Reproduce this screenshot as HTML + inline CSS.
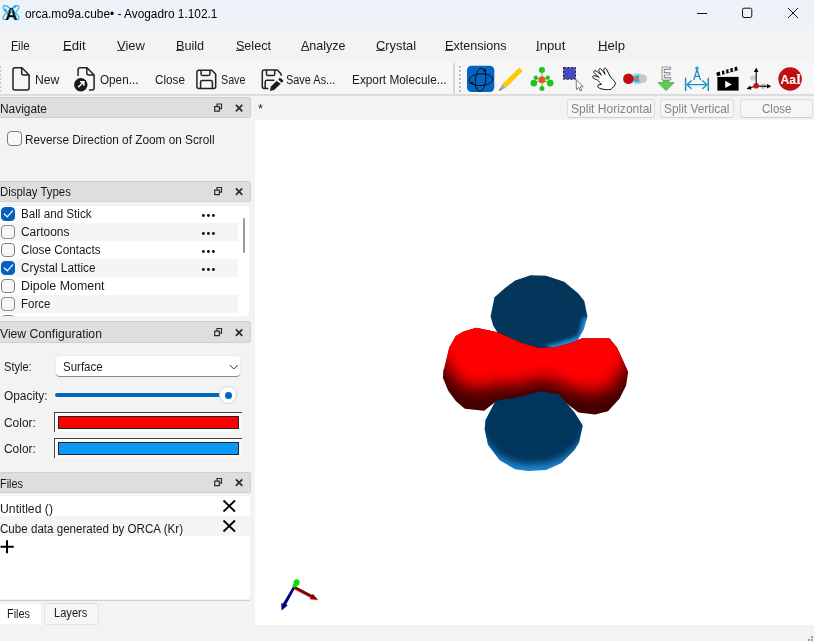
<!DOCTYPE html>
<html>
<head>
<meta charset="utf-8">
<title>orca.mo9a.cube - Avogadro 1.102.1</title>
<style>
html,body{margin:0;padding:0;}
body{width:814px;height:641px;overflow:hidden;position:relative;background:#f3f3f3;font-family:"Liberation Sans",sans-serif;font-size:12px;color:#1a1a1a;}
.a{position:absolute;}
.t{position:absolute;white-space:nowrap;line-height:16px;height:16px;transform-origin:0 50%;}
.t u{text-decoration-thickness:1px;text-underline-offset:0.4px;text-decoration-color:#444;}
.dockhead{position:absolute;left:-1px;width:250px;height:19px;background:#dedede;border:1px solid #d0d0d0;border-radius:1.5px;}
.cb{position:absolute;width:12.6px;height:12.6px;border:1px solid #858585;border-radius:4px;background:#f7f7f7;}
.cb.on{background:#0560c0;border-color:#0560c0;}
.btn{position:absolute;height:17px;top:99px;border:1px solid #dcdcdc;border-bottom-color:#cfcfcf;border-radius:3.5px;background:#f6f6f6;}
svg{position:absolute;overflow:visible;}
</style>
</head>
<body>
<!-- bars -->
<div class="a" style="left:0;top:0;width:814px;height:29px;background:#eef3f9;"></div>
<div class="a" style="left:0;top:61.5px;width:814px;height:32.5px;background:#f6f6f6;"></div>
<div class="a" style="left:0;top:94px;width:814px;height:2px;background:#dcdcdc;"></div>

<!-- canvas -->
<div class="a" style="left:255px;top:120px;width:559px;height:505px;background:#fff;"></div>
<div class="btn" style="left:567px;width:86px;"></div>
<div class="btn" style="left:660px;width:72px;"></div>
<div class="btn" style="left:740px;width:71px;"></div>

<!-- dock headers -->
<div class="dockhead" style="top:97px;"></div>
<div class="dockhead" style="top:180.5px;"></div>
<div class="dockhead" style="top:321px;height:19.5px;"></div>
<div class="dockhead" style="top:471.5px;"></div>

<!-- navigate checkbox -->
<div class="cb" style="left:7.3px;top:131.3px;width:13px;height:13px;border-color:#7c7c7c;"></div>

<!-- display types list -->
<div class="a" style="left:0;top:205.5px;width:249px;height:110.2px;background:#fff;border-radius:0 4px 4px 0;"></div>
<div class="a" style="left:0;top:223px;width:238px;height:18px;background:#f5f5f5;"></div>
<div class="a" style="left:0;top:259px;width:238px;height:18px;background:#f5f5f5;"></div>
<div class="a" style="left:0;top:295px;width:238px;height:17.6px;background:#f5f5f5;"></div>
<div class="a" style="left:243.2px;top:217.5px;width:1.4px;height:35px;background:#9c9c9c;border-radius:1px;"></div>
<div class="cb on" style="left:0.6px;top:206.5px;"></div>
<div class="cb" style="left:0.6px;top:224.5px;"></div>
<div class="cb" style="left:0.6px;top:242.5px;"></div>
<div class="cb on" style="left:0.6px;top:260.5px;"></div>
<div class="cb" style="left:0.6px;top:278.5px;"></div>
<div class="cb" style="left:0.6px;top:296.5px;"></div>
<div class="a" style="left:0.6px;top:314.5px;width:12.6px;height:6px;border:1px solid #858585;border-radius:4px;clip-path:inset(0 0 6px 0);"></div>
<svg style="left:0;top:0" width="250" height="320" viewBox="0 0 250 320">
 <g fill="none" stroke="#fff" stroke-width="1.2" stroke-linecap="round" stroke-linejoin="round">
  <path d="M4.3 214 L7.3 216.8 L12.6 210.8"/>
  <path d="M4.3 268 L7.3 270.8 L12.6 264.8"/>
 </g>
 <g fill="#111">
  <circle cx="203.4" cy="215.5" r="1.45"/><circle cx="208.4" cy="215.5" r="1.45"/><circle cx="213.4" cy="215.5" r="1.45"/>
  <circle cx="203.4" cy="233.5" r="1.45"/><circle cx="208.4" cy="233.5" r="1.45"/><circle cx="213.4" cy="233.5" r="1.45"/>
  <circle cx="203.4" cy="251.5" r="1.45"/><circle cx="208.4" cy="251.5" r="1.45"/><circle cx="213.4" cy="251.5" r="1.45"/>
  <circle cx="203.4" cy="269.5" r="1.45"/><circle cx="208.4" cy="269.5" r="1.45"/><circle cx="213.4" cy="269.5" r="1.45"/>
 </g>
</svg>

<!-- view configuration -->
<div class="a" style="left:56px;top:356px;width:184px;height:20px;background:#fff;border-radius:4px;border-bottom:1px solid #8a8a8a;box-shadow:0 0 0 0.5px #e5e5e5;"></div>
<div class="a" style="left:55px;top:393px;width:166px;height:4px;background:#0067c0;border-radius:2px;"></div>
<div class="a" style="left:220px;top:387px;width:16px;height:16px;border-radius:50%;background:#fff;box-shadow:0 0 0 1px #d6d6d6;"></div>
<div class="a" style="left:224.5px;top:391.5px;width:7px;height:7px;border-radius:50%;background:#0067c0;"></div>
<div class="a" style="left:54px;top:412px;width:187px;height:19px;background:#f9f9f9;border-left:1px solid #444;border-top:1px solid #444;"></div>
<div class="a" style="left:58px;top:416px;width:179px;height:11px;background:#ff0000;border:1px solid #222;"></div>
<div class="a" style="left:54px;top:438px;width:187px;height:19px;background:#f9f9f9;border-left:1px solid #444;border-top:1px solid #444;"></div>
<div class="a" style="left:58px;top:442px;width:179px;height:11px;background:#0a98f7;border:1px solid #222;"></div>

<!-- files list -->
<div class="a" style="left:0;top:496px;width:250px;height:103px;background:#fff;border-radius:0 0 4px 0;"></div>
<div class="a" style="left:0;top:516px;width:250px;height:20px;background:#f5f5f5;"></div>
<div class="a" style="left:0;top:600.3px;width:250px;height:1.2px;background:#cfcfcf;"></div>
<div class="a" style="left:0;top:604px;width:41px;height:20px;background:#fff;border-radius:3px 3px 0 0;"></div>
<div class="a" style="left:44px;top:603px;width:53px;height:20px;background:#f6f6f6;border:1px solid #e2e2e2;border-radius:3px;"></div>

<svg style="left:0;top:0" width="814" height="641" viewBox="0 0 814 641">
 <!-- dock header buttons -->
 <g id="dockbtn" fill="none" stroke="#2b2b2b">
  <path d="M214.7 106.7h4.6v4.4h-4.6z M217 106.5v-2.5h4.5v4.6h-2" stroke-width="1.2"/>
  <path d="M235.9 104.9l6.4 6.4m0-6.4l-6.4 6.4" stroke-width="1.7"/>
 </g>
 <use href="#dockbtn" y="83.5"/>
 <use href="#dockbtn" y="224.5"/>
 <use href="#dockbtn" y="374.5"/>
 <!-- combo chevron -->
 <path d="M229.8 365l4 4 4-4" fill="none" stroke="#333" stroke-width="1"/>
 <!-- file X icons -->
 <g fill="none" stroke="#000" stroke-width="1.8">
  <path d="M223.5 500.5l11.5 11m0-11l-11.5 11"/>
  <path d="M223.5 520.5l11.5 11m0-11l-11.5 11"/>
  <path d="M0.5 546.7h13.2M7 540.2v13" stroke-width="2"/>
 </g>
 <!-- window controls -->
 <g fill="none" stroke="#111" stroke-width="1">
  <path d="M697 13.5h10.2"/>
  <rect x="742.5" y="8.2" width="9.3" height="9.3" rx="1.5"/>
  <path d="M788 8l10 10m0-10l-10 10"/>
 </g>
 <!-- size grip -->
 <g fill="#a0a0a0"><rect x="811" y="636" width="2" height="2"/><rect x="808" y="639" width="2" height="2"/><rect x="811" y="639" width="2" height="2"/></g>
<!--ICONS1S-->
 <!-- app icon -->
 <g>
  <g fill="none" stroke="#2bb5e8" stroke-width="1.1">
   <ellipse cx="11" cy="12.6" rx="10" ry="3" transform="rotate(-40 11 12.6)"/>
   <ellipse cx="11" cy="12.6" rx="10" ry="3" transform="rotate(40 11 12.6)"/>
  </g>
  <text x="11.3" y="19.8" text-anchor="middle" font-family="Liberation Sans, sans-serif" font-weight="bold" font-size="17" fill="#111">A</text>
  <circle cx="5.3" cy="10.2" r="1.6" fill="#2bb5e8"/>
  <circle cx="14.8" cy="6.6" r="1.5" fill="#2bb5e8"/>
  <path d="M9.7 11.2 L11.3 8.3 L12.9 11.2z" fill="#2bb5e8"/>
 </g>
 <!-- New -->
 <g fill="none" stroke="#222" stroke-width="1.5" stroke-linejoin="round">
  <path d="M15 67.7h6.9l7.2 7.4v12.8a2 2 0 0 1 -2 2h-12.1a2 2 0 0 1 -2 -2v-18.2a2 2 0 0 1 2 -2z"/>
  <path d="M21.7 67.9v5.2a2 2 0 0 0 2 2h5.2"/>
 </g>
 <!-- Open -->
 <g fill="none" stroke="#222" stroke-width="1.5" stroke-linejoin="round">
  <path d="M78.1 76v-6.3a2 2 0 0 1 2 -2h6.8l7.2 7.4v12.8a2 2 0 0 1 -2 2h-3.2"/>
  <path d="M86.8 67.9v5.2a2 2 0 0 0 2 2h5.2"/>
 </g>
 <circle cx="80.8" cy="84.8" r="6.7" fill="#1a1a1a"/>
 <path d="M78.2 87.3L83.6 82M80 81.8h3.9v3.9" fill="none" stroke="#fff" stroke-width="1.5"/>
 <!-- Save -->
 <g fill="none" stroke="#222" stroke-width="1.5" stroke-linejoin="round">
  <path d="M198.9 70.2h13l3.8 4v12.4a2 2 0 0 1 -2 2h-14.8a2 2 0 0 1 -2 -2v-14.4a2 2 0 0 1 2 -2z"/>
  <path d="M201.1 70.4v3.5a1.6 1.6 0 0 0 1.6 1.6h5.6a1.6 1.6 0 0 0 1.6 -1.6v-3.5"/>
  <path d="M200.6 88.4v-6.4a1.6 1.6 0 0 1 1.6 -1.6h8.6a1.6 1.6 0 0 1 1.6 1.6v6.4"/>
 </g>
 <!-- Save As -->
 <g fill="none" stroke="#222" stroke-width="1.5" stroke-linejoin="round">
  <path d="M268.4 88.6h-4.1a2 2 0 0 1 -2 -2v-14.7a2 2 0 0 1 2 -2h13l3.8 4v1.8"/>
  <path d="M266.5 70.2v3.7a1.6 1.6 0 0 0 1.6 1.6h5a1.6 1.6 0 0 0 1.6 -1.6v-3.7"/>
  <path d="M265.2 88.4v-6.6a1.6 1.6 0 0 1 1.6 -1.6h7.6"/>
 </g>
 <path d="M276.6 81.3L280.4 83.8L274.3 89.5L270.3 90.7L271.2 86.5z" fill="#1a1a1a" stroke="#1a1a1a" stroke-width="0.6" stroke-linejoin="round"/>
 <rect x="278.4" y="78.8" width="5" height="2.8" rx="1.1" fill="#1a1a1a" transform="rotate(40 280.9 80.2)"/>
<!--ICONS1E-->
<!--ICONS2S-->
 <g fill="#bdbdbd"><rect x="0" y="66" width="1.2" height="1.6"/><rect x="0" y="70.1" width="1.2" height="1.6"/><rect x="0" y="74.1" width="1.2" height="1.6"/><rect x="0" y="78.2" width="1.2" height="1.6"/><rect x="0" y="82.2" width="1.2" height="1.6"/><rect x="0" y="86.3" width="1.2" height="1.6"/><rect x="0" y="90.3" width="1.2" height="1.6"/></g>
 <!-- toolbar separator + handle -->
 <rect x="453" y="63" width="2" height="31" fill="#d8d8d8"/>
 <g fill="#9a9a9a">
  <rect x="459" y="66" width="1.6" height="1.6"/><rect x="459" y="70.1" width="1.6" height="1.6"/><rect x="459" y="74.1" width="1.6" height="1.6"/><rect x="459" y="78.2" width="1.6" height="1.6"/><rect x="459" y="82.2" width="1.6" height="1.6"/><rect x="459" y="86.3" width="1.6" height="1.6"/><rect x="459" y="90.3" width="1.6" height="1.6"/>
 </g>
 <!-- navigate -->
 <rect x="467" y="65.8" width="27.3" height="26.3" rx="4.5" fill="#0563c1"/>
 <g fill="none" stroke="#0a0a0a" stroke-width="0.9">
  <ellipse cx="481" cy="79.7" rx="11.8" ry="5.9" transform="rotate(-3 481 79.7)"/>
  <ellipse cx="480.6" cy="79.8" rx="5.2" ry="11.7" transform="rotate(6 480.6 79.8)"/>
 </g>
 <path d="M482.6 69.2L486.2 69.5L485.5 73z" fill="#0a0a0a"/>
 <path d="M469.2 82.9L472.5 81.4L473.3 84.9z" fill="#0a0a0a"/>
 <!-- pencil -->
 <path d="M519.3 67.4L522.7 70.9L505.9 87.8L502.4 83.9z" fill="#fbcb04"/>
 <path d="M502.4 83.9L505.9 87.8L499 91z" fill="#a8a8a8"/>
 <path d="M500.2 88.3L501.5 89.8L499 91z" fill="#555"/>
 <!-- molecule -->
 <g stroke="#7a9a5a" stroke-width="0.9">
  <path d="M541.95 79.8V70M541.95 79.8V88.4M541.95 79.8L533.8 83.1M541.95 79.8L550.2 83.1M541.95 79.8L535.8 77.7M541.95 79.8L547.7 77.7"/>
 </g>
 <g fill="#1fc41f">
  <circle cx="541.95" cy="70" r="3.05"/><circle cx="541.95" cy="88.4" r="2.5"/>
  <circle cx="533.8" cy="83.1" r="3.4"/><circle cx="550.2" cy="83.1" r="3.4"/>
  <circle cx="535.8" cy="77.7" r="2.2"/><circle cx="547.7" cy="77.7" r="2.2"/>
 </g>
 <circle cx="541.95" cy="79.8" r="3.5" fill="#e25b26"/>
 <!-- selection -->
 <rect x="563.5" y="67.5" width="12" height="11.7" fill="#4a4abf" stroke="#111" stroke-width="0.9" stroke-dasharray="2.2 1.6"/>
 <path d="M576.2 79.6L576.4 89.6L578.7 87.5L580.3 91L581.8 90.3L580.3 86.9L583.2 86.7z" fill="#fff" stroke="#666" stroke-width="0.9" stroke-linejoin="round"/>
<!--ICONS2E-->
<!--ICONS3S-->
 <!-- hand -->
 <path d="M608.3 89.6C606.5 89.9 603.5 89.3 601 88.8C599.2 88.4 597.6 87.3 597.8 86C598 84.6 599.6 84.3 601.6 84.6C600.6 83.4 599.4 81.6 597.6 80.2C596 79 593.6 78.8 592.8 77.6C592.2 76.4 593.2 75.6 594.6 75.8C596.4 76 598.2 77 599.2 77.4C597.8 75.8 595.2 74.2 594 72.6C593.2 71.4 594.4 70.2 595.8 70.9C598 72 600.2 74.2 601.4 75.2C600.6 73.6 599 71.6 598.8 70.2C598.7 68.9 600.2 68.2 601.2 69.2C602.8 70.8 604 73 605 74.4C604.6 72.8 603.6 70.6 603.8 69.2C604 68 605.6 67.8 606.4 69C608 71.4 608.6 74 610 76.2C611.6 78.6 614.6 80.8 615.4 83.2C615.8 85 612.4 88 610.8 89.4z" fill="#fff" stroke="#111" stroke-width="1" stroke-linejoin="round"/>
 <!-- bond-centric -->
 <defs>
  <radialGradient id="glow" cx="0.5" cy="0.5" r="0.5">
   <stop offset="0.35" stop-color="#2aa0c8" stop-opacity="0.95"/>
   <stop offset="1" stop-color="#6cc4e0" stop-opacity="0"/>
  </radialGradient>
 </defs>
 <ellipse cx="637.5" cy="78.8" rx="9" ry="6.5" fill="url(#glow)"/>
 <rect x="632" y="78" width="8" height="1.6" fill="#ee6a6a"/>
 <circle cx="628.4" cy="78.8" r="5.3" fill="#bf0e0e"/>
 <circle cx="642.8" cy="78.8" r="4" fill="#c6c6c6"/>
 <!-- optimize -->
 <text x="666.1" y="80" text-anchor="middle" font-family="Liberation Sans, sans-serif" font-weight="bold" font-size="18" fill="#fff" stroke="#505050" stroke-width="0.7" transform="translate(666.1 0) scale(0.86 1) translate(-666.1 0)">E</text>
 <path d="M663.3 80.4h5.5v2.2h5.3L666 90.6L658 82.6h5.3z" fill="#5ccb5c" stroke="#35a035" stroke-width="0.7" stroke-linejoin="round"/>
 <!-- measure -->
 <g fill="none" stroke="#1c8fc0" stroke-width="1.3" stroke-linecap="round" stroke-linejoin="round">
  <circle cx="697" cy="68.2" r="1.1"/>
  <path d="M693.8 79.6L697 69.8L700.4 79.6M694.9 76.4h4.3"/>
  <path d="M687 84.7h20M691.3 80.8L687 84.7L691.3 88.6M702.7 80.8L707 84.7L702.7 88.6"/>
  <path d="M685.6 78.2v12.2M708.3 78.2v12.2" stroke-width="1.5"/>
 </g>
 <!-- clapper -->
 <rect x="717.4" y="76.9" width="21.2" height="13.7" fill="#000"/>
 <path d="M725.2 80.8v7.2l6.6 -3.6z" fill="#fff"/>
 <path d="M716.1 72.8L736.8 66.6L737.9 70.3L717.2 76.2z" fill="#000"/>
 <g stroke="#fff" stroke-width="1.9">
  <path d="M720.9 70.8l0.3 4.2M725.1 69.5l0.3 4.2M729.3 68.3l0.3 4.2M733.5 67l0.3 4.2"/>
 </g>
 <!-- align axes -->
 <circle cx="753" cy="78" r="2.8" fill="#cfcfcf"/>
 <circle cx="763.3" cy="86.2" r="2.8" fill="#c4c4c4"/>
 <g stroke="#000" stroke-width="1.1" fill="#000">
  <path d="M756.2 85V71" fill="none"/>
  <path d="M756.2 67.6l2.3 4.4h-4.6z" stroke="none"/>
  <path d="M756.2 86.2H767.5" fill="none"/>
  <path d="M771.2 86.2l-4.2 2.3v-4.6z" stroke="none"/>
  <path d="M756 86L749.5 88" fill="none"/>
  <path d="M746.6 89l3.4 -3.6 1.6 4.2z" stroke="none"/>
 </g>
 <circle cx="756.2" cy="85.8" r="2.8" fill="#c81414"/>
 <!-- AaI -->
 <circle cx="790.1" cy="79" r="11.8" fill="#bf1010"/>
 <text x="780.4" y="83.9" font-family="Liberation Sans, sans-serif" font-weight="bold" font-size="13.2" fill="#fff" transform="translate(780.4 0) scale(0.92 1) translate(-780.4 0)">Aa<tspan font-family="Liberation Serif, serif" font-size="14.2">I</tspan></text>
<!--ICONS3E-->

<!--ORBS-->
 <!-- orbital -->
 <defs>
  <path id="pTop" d="M530.6 275.3 L546.1 275.8 L564.2 281.8 L578.3 293.4 L584.3 301.1 L587.4 316.6 L583.5 329.5 L577.1 341.1 L560 349 L543.5 350 L520.3 344 L498.4 334 L493.2 325.6 L490.6 316.6 L494.5 297.2 L504.8 288.2 L515.1 280.5 Z"/>
  <path id="pBot" d="M497.1 398 L515.1 395 L540.9 389 L559 392 L566.7 403.5 L574.5 412.6 L582.7 425.5 L579.1 442.2 L574.5 450 L561.6 462.9 L546.1 470.1 L528 471.1 L515.1 469.3 L499.7 460.3 L488 444.8 L484.7 429.3 L485.5 420.3 Z"/>
  <path id="pRed" d="M444.2 368.2 L449.3 347.6 L455.8 336 L463.5 331.6 L476.4 327.7 L498.4 332.6 L520.3 342.4 L538.4 348.1 L553.8 347.6 L571.9 342.4 L582.2 338.3 L609.3 338.3 L617 347.6 L623 360.5 L627.4 370 L628.1 372.6 L626.1 385.5 L619.6 398.4 L608 411.3 L595.1 414.4 L578.4 412.6 L566.7 403.5 L559 394.5 L540.9 391.2 L515.1 397.9 L497.1 400.4 L484.2 410.8 L464.8 408.7 L455.8 401 L448.1 390.6 L442.9 377.7 L443.4 370 Z"/>
  <clipPath id="cTop"><use href="#pTop"/></clipPath>
  <clipPath id="cBot"><use href="#pBot"/></clipPath>
  <clipPath id="cRed"><use href="#pRed"/></clipPath>
  <radialGradient id="gTop" gradientUnits="userSpaceOnUse" cx="524" cy="292" r="74">
   <stop offset="0" stop-color="#04355a"/>
   <stop offset="0.85" stop-color="#04355a"/>
   <stop offset="0.93" stop-color="#0c5c9c"/>
   <stop offset="1" stop-color="#2196e8"/>
  </radialGradient>
  <filter id="b3" x="-20%" y="-30%" width="140%" height="160%"><feGaussianBlur stdDeviation="2.2"/></filter>
  <filter id="b4" x="-20%" y="-20%" width="140%" height="140%"><feGaussianBlur stdDeviation="4"/></filter>
  <filter id="b6" x="-20%" y="-20%" width="140%" height="140%"><feGaussianBlur stdDeviation="8"/></filter>
 </defs>
 <use href="#pTop" fill="#04355a"/>
 <g clip-path="url(#cTop)">
  <path d="M548 349.5 L555.8 348.6 L571.9 343.4 L582.2 339.3 L585 329.5 L588 318" fill="none" stroke="#2398ea" stroke-width="9" stroke-linejoin="round" filter="url(#b3)"/>
 </g>
 <g clip-path="url(#cBot)">
  <rect x="480" y="385" width="110" height="90" fill="#208ede"/>
  <path d="M440.0 370.0 L440.0 423.0 L478.9 423.3 L482.6 438.8 L495.7 454.3 L513.0 463.3 L527.4 465.1 L547.7 464.1 L565.0 456.9 L579.5 444.0 L584.6 436.2 L588.7 419.5 L630.0 419.0 L630.0 370.0 Z" fill="#04365c" filter="url(#b4)"/>
 </g>
 <g clip-path="url(#cRed)">
  <rect x="440" y="325" width="190" height="92" fill="#420000"/>
  <path d="M380 250 L380 356 L442.9 355.7 L448.1 368.6 L455.8 379 L464.8 386.7 L484.2 388.8 L497.1 384 L515.1 384.9 L540.9 378.6 L559 381.5 L566.7 387 L578.4 390.6 L595.1 392.4 L608 389.3 L619.6 376.4 L626.1 363.5 L628.1 350.6 L690 350 L690 250 Z" fill="#ff0000" filter="url(#b6)"/>
 </g>
<!--ORBE-->
<!--AXS-->
 <!-- axes -->
 <path d="M293.2 586.2L295.4 587.6L286.3 604.2L287.6 605.6L281.6 610.6L281.2 603.2L283 603.6z" fill="#00007f"/>
 <path d="M294.5 585.7L312.2 595L312.7 593.8L318 599.8L310.1 598.9L310.8 597.6L293.1 588.3z" fill="#7f0000"/>
 <path d="M293.1 588.5L310.6 597.8L310.1 599L318 599.9" fill="none" stroke="#e00000" stroke-width="0.5"/>
 <path d="M292.4 586.6L294.4 581L298.8 584.4L295 587.8z" fill="#00e400"/>
 <circle cx="296.6" cy="582.2" r="3" fill="#00e400"/>
<!--AXE-->

</svg>

<div class="t" style="left:24.9px;top:6.0px;font-size:12px;color:#000;transform:scaleX(0.9878);">orca.mo9a.cube• - Avogadro 1.102.1</div>
<div class="t" style="left:11.3px;top:38.0px;font-size:13px;color:#1a1a1a;transform:scaleX(0.8918);"><u>F</u>ile</div>
<div class="t" style="left:62.9px;top:38.0px;font-size:13px;color:#1a1a1a;transform:scaleX(1.0086);"><u>E</u>dit</div>
<div class="t" style="left:116.5px;top:38.0px;font-size:13px;color:#1a1a1a;transform:scaleX(1.0017);"><u>V</u>iew</div>
<div class="t" style="left:175.9px;top:38.0px;font-size:13px;color:#1a1a1a;transform:scaleX(0.9716);"><u>B</u>uild</div>
<div class="t" style="left:235.7px;top:38.0px;font-size:13px;color:#1a1a1a;transform:scaleX(0.9657);"><u>S</u>elect</div>
<div class="t" style="left:300.6px;top:38.0px;font-size:13px;color:#1a1a1a;transform:scaleX(0.9600);"><u>A</u>nalyze</div>
<div class="t" style="left:375.8px;top:38.0px;font-size:13px;color:#1a1a1a;transform:scaleX(0.9888);"><u>C</u>rystal</div>
<div class="t" style="left:444.8px;top:38.0px;font-size:13px;color:#1a1a1a;transform:scaleX(0.9671);"><u>E</u>xtensions</div>
<div class="t" style="left:536.3px;top:38.0px;font-size:13px;color:#1a1a1a;transform:scaleX(1.0125);"><u>I</u>nput</div>
<div class="t" style="left:598.2px;top:38.0px;font-size:13px;color:#1a1a1a;transform:scaleX(1.0093);"><u>H</u>elp</div>
<div class="t" style="left:35.1px;top:72.0px;font-size:12px;color:#1a1a1a;transform:scaleX(1.0160);">New</div>
<div class="t" style="left:99.7px;top:72.0px;font-size:12px;color:#1a1a1a;transform:scaleX(0.9756);">Open...</div>
<div class="t" style="left:154.8px;top:72.0px;font-size:12px;color:#1a1a1a;transform:scaleX(0.9776);">Close</div>
<div class="t" style="left:220.8px;top:72.0px;font-size:12px;color:#1a1a1a;transform:scaleX(0.8918);">Save</div>
<div class="t" style="left:286.1px;top:72.0px;font-size:12px;color:#1a1a1a;transform:scaleX(0.9106);">Save As...</div>
<div class="t" style="left:351.5px;top:72.0px;font-size:12px;color:#1a1a1a;transform:scaleX(0.9849);">Export Molecule...</div>
<div class="t" style="left:0.3px;top:101.0px;font-size:12px;color:#1a1a1a;transform:scaleX(0.9921);">Navigate</div>
<div class="t" style="left:0.3px;top:184.0px;font-size:12px;color:#1a1a1a;transform:scaleX(0.9519);">Display Types</div>
<div class="t" style="left:0.0px;top:326.0px;font-size:12px;color:#1a1a1a;transform:scaleX(1.0138);">View Configuration</div>
<div class="t" style="left:0.3px;top:476.0px;font-size:12px;color:#1a1a1a;transform:scaleX(0.9075);">Files</div>
<div class="t" style="left:25.0px;top:132.0px;font-size:12px;color:#1a1a1a;transform:scaleX(0.9837);">Reverse Direction of Zoom on Scroll</div>
<div class="t" style="left:21.0px;top:206.0px;font-size:12px;color:#1a1a1a;transform:scaleX(0.9711);">Ball and Stick</div>
<div class="t" style="left:21.0px;top:224.0px;font-size:12px;color:#1a1a1a;transform:scaleX(0.9938);">Cartoons</div>
<div class="t" style="left:21.0px;top:242.0px;font-size:12px;color:#1a1a1a;transform:scaleX(0.9770);">Close Contacts</div>
<div class="t" style="left:21.0px;top:260.0px;font-size:12px;color:#1a1a1a;transform:scaleX(0.9799);">Crystal Lattice</div>
<div class="t" style="left:21.0px;top:278.0px;font-size:12px;color:#1a1a1a;transform:scaleX(1.0347);">Dipole Moment</div>
<div class="t" style="left:21.0px;top:296.0px;font-size:12px;color:#1a1a1a;transform:scaleX(0.9580);">Force</div>
<div class="t" style="left:4.0px;top:359.0px;font-size:12px;color:#1a1a1a;transform:scaleX(0.9229);">Style:</div>
<div class="t" style="left:62.9px;top:359.0px;font-size:12px;color:#1a1a1a;transform:scaleX(0.9575);">Surface</div>
<div class="t" style="left:4.2px;top:388.0px;font-size:12px;color:#1a1a1a;transform:scaleX(0.9906);">Opacity:</div>
<div class="t" style="left:4.2px;top:415.0px;font-size:12px;color:#1a1a1a;transform:scaleX(0.9933);">Color:</div>
<div class="t" style="left:4.2px;top:441.0px;font-size:12px;color:#1a1a1a;transform:scaleX(0.9933);">Color:</div>
<div class="t" style="left:0.2px;top:501.0px;font-size:12px;color:#1a1a1a;transform:scaleX(1.0189);">Untitled ()</div>
<div class="t" style="left:0.2px;top:521.0px;font-size:12px;color:#1a1a1a;transform:scaleX(0.9660);">Cube data generated by ORCA (Kr)</div>
<div class="t" style="left:7.2px;top:606.0px;font-size:12px;color:#1a1a1a;transform:scaleX(0.9075);">Files</div>
<div class="t" style="left:53.8px;top:605.0px;font-size:12px;color:#1a1a1a;transform:scaleX(0.9242);">Layers</div>
<div class="t" style="left:258.0px;top:101.0px;font-size:12px;color:#1a1a1a;transform:scaleX(1.0702);">*</div>
<div class="t" style="left:571.0px;top:101.0px;font-size:12px;color:#838383;transform:scaleX(1.0037);">Split Horizontal</div>
<div class="t" style="left:664.0px;top:101.0px;font-size:12px;color:#838383;transform:scaleX(0.9920);">Split Vertical</div>
<div class="t" style="left:762.0px;top:101.0px;font-size:12px;color:#838383;transform:scaleX(0.9613);">Close</div>
</body>
</html>
